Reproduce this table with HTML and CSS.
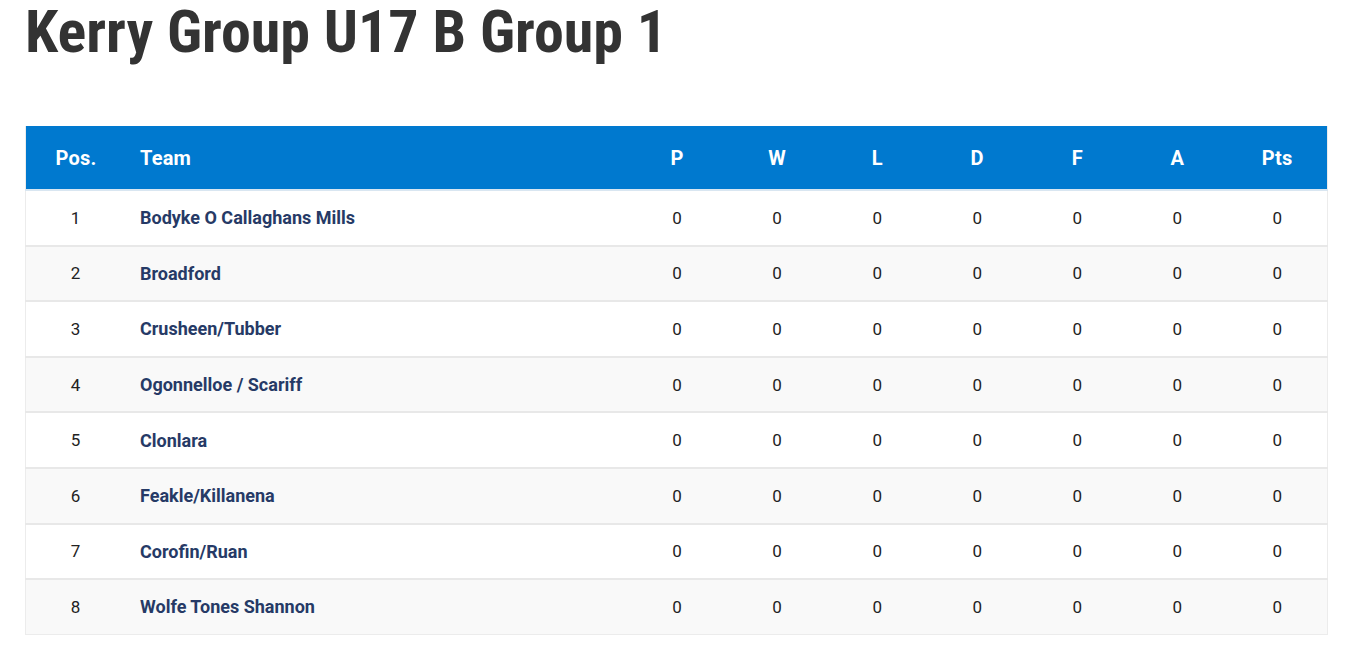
FILE: index.html
```html
<!DOCTYPE html>
<html lang="en">
<head>
<meta charset="utf-8">
<title>Kerry Group U17 B Group 1</title>
<link rel="stylesheet" href="styles.css">
</head>
<body>
<main class="page">
  <h1 class="title">Kerry Group U17 B Group 1</h1>
  <table class="league">
    <thead>
      <tr>
        <th class="pos">Pos.</th>
        <th class="team">Team</th>
        <th>P</th><th>W</th><th>L</th><th>D</th><th>F</th><th>A</th><th>Pts</th>
      </tr>
    </thead>
    <tbody>
      <tr><td class="pos">1</td><td class="team">Bodyke O Callaghans Mills</td><td>0</td><td>0</td><td>0</td><td>0</td><td>0</td><td>0</td><td>0</td></tr>
      <tr><td class="pos">2</td><td class="team">Broadford</td><td>0</td><td>0</td><td>0</td><td>0</td><td>0</td><td>0</td><td>0</td></tr>
      <tr><td class="pos">3</td><td class="team">Crusheen/Tubber</td><td>0</td><td>0</td><td>0</td><td>0</td><td>0</td><td>0</td><td>0</td></tr>
      <tr><td class="pos">4</td><td class="team">Ogonnelloe / Scariff</td><td>0</td><td>0</td><td>0</td><td>0</td><td>0</td><td>0</td><td>0</td></tr>
      <tr><td class="pos">5</td><td class="team">Clonlara</td><td>0</td><td>0</td><td>0</td><td>0</td><td>0</td><td>0</td><td>0</td></tr>
      <tr><td class="pos">6</td><td class="team">Feakle/Killanena</td><td>0</td><td>0</td><td>0</td><td>0</td><td>0</td><td>0</td><td>0</td></tr>
      <tr><td class="pos">7</td><td class="team">Corofin/Ruan</td><td>0</td><td>0</td><td>0</td><td>0</td><td>0</td><td>0</td><td>0</td></tr>
      <tr><td class="pos">8</td><td class="team">Wolfe Tones Shannon</td><td>0</td><td>0</td><td>0</td><td>0</td><td>0</td><td>0</td><td>0</td></tr>
    </tbody>
  </table>
</main>
</body>
</html>
```

FILE: styles.css
```css
html, body {
  margin: 0;
  padding: 0;
  background: #ffffff;
}

.page {
  padding: 0 21px 0 25px;
  font-family: Roboto, "Noto Sans", sans-serif;
  color: #222222;
}

.title {
  margin: -2px 0 60px 0;
  padding-top: 0;
  font-family: "Roboto Condensed", "Liberation Sans Narrow", "DejaVu Sans Condensed", Roboto, sans-serif;
  font-weight: 700;
  font-size: 60px;
  line-height: 68px;
  color: #333333;
  letter-spacing: 0;
}

.league {
  width: 1303px;
  border-collapse: collapse;
  table-layout: fixed;
  border-left: 1px solid #ececec;
  border-right: 1px solid #ececec;
}

.league th {
  background: #0079cf;
  color: #ffffff;
  font-family: Roboto, "Noto Sans", sans-serif;
  font-weight: 700;
  font-size: 20px;
  letter-spacing: 0.2px;
  height: 62px;
  padding: 1px 0 0 0;
  text-align: center;
  border-bottom: 2px solid #d9e6f1;
}

.league td {
  height: 53.6px;
  padding: 0;
  text-align: center;
  font-size: 17px;
  color: #222222;
  border-bottom: 2px solid #e8e8e8;
}

.league tbody tr:last-child td {
  border-bottom: 1px solid #ececec;
}

.league tbody tr:nth-child(even) td {
  background: #f9f9f9;
}

.league .pos {
  width: 100px;
}

.league td.pos {
  padding-right: 1px;
}

.league .team {
  width: 487px;
  padding-left: 14px;
  text-align: left;
}

.league td.team {
  color: #263a66;
  font-weight: 700;
  font-size: 18px;
}
```
